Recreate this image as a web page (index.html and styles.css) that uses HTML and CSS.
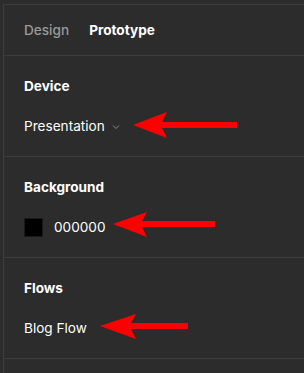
FILE: index.html
```html
<!DOCTYPE html>
<html>
<head>
<meta charset="utf-8">
<link rel="stylesheet" href="styles.css">
</head>
<body>
<div class="frame">
  <div class="panel">
    <div class="tabs">
      <span class="tab">Design</span>
      <span class="tab active">Prototype</span>
    </div>
    <section class="section">
      <div class="title">Device</div>
      <div class="row">
        <span class="value">Presentation</span>
        <svg class="chev" width="8" height="6" viewBox="0 0 8 6"><path d="M1 1.5 L4 4.5 L7 1.5" fill="none" stroke="#8a8a8a" stroke-width="1"/></svg>
      </div>
      <svg class="arrow a1" width="106" height="26" viewBox="0 0 106 26"><polygon points="0,13 34,0 29,10 104,10 104,16 29,16 34,26" fill="#ff0000"/></svg>
    </section>
    <section class="section">
      <div class="title">Background</div>
      <div class="row">
        <span class="swatch"></span>
        <span class="value hex">000000</span>
      </div>
      <svg class="arrow a2" width="104" height="26" viewBox="0 0 104 26"><polygon points="0,12 34,0 29,9 102,9 102,15 29,15 34,25" fill="#ff0000"/></svg>
    </section>
    <section class="section">
      <div class="title">Flows</div>
      <div class="row">
        <span class="value">Blog Flow</span>
      </div>
      <svg class="arrow a3" width="90" height="26" viewBox="0 0 90 26"><polygon points="0,12 36,0 31,9 88,9 88,15 31,15 36,25" fill="#ff0000"/></svg>
    </section>
  </div>
</div>
</body>
</html>
```

FILE: styles.css
```css
html, body {
  margin: 0;
  padding: 0;
  background: #2c2c2c;
}
body {
  font-family: Inter, "Noto Sans", sans-serif;
  color: #ffffff;
  width: 304px;
  height: 373px;
  overflow: hidden;
}
.frame {
  padding-top: 4px;
  padding-left: 3px;
  height: 369px;
}
.panel {
  border-top: 1px solid #3d3d3d;
  border-left: 1px solid #3d3d3d;
  height: 100%;
  box-sizing: border-box;
}
.tabs {
  display: flex;
  gap: 20px;
  padding: 0 0 0 20px;
  height: 50px;
  align-items: center;
  border-bottom: 1px solid #3d3d3d;
  font-size: 13.6px;
}
.tab {
  color: #9a9a9a;
  font-weight: 500;
}
.tab.active {
  color: #ffffff;
  font-weight: 700;
}
.section {
  position: relative;
  border-bottom: 1px solid #3d3d3d;
  padding: 0 0 0 20px;
  height: 101px;
  box-sizing: border-box;
}
.title {
  font-size: 13.6px;
  font-weight: 700;
  padding-top: 22px;
  height: 16px;
  line-height: 16px;
}
.row {
  display: flex;
  align-items: center;
  margin-top: 24px;
  height: 16px;
  font-size: 13.6px;
}
.value {
  line-height: 16px;
}
.chev {
  margin-left: 7px;
  margin-top: 1px;
}
.swatch {
  width: 19px;
  height: 19px;
  background: #000000;
  border: 1px solid #1a1a1a;
  box-sizing: border-box;
  margin-right: 11px;
}
.arrow {
  position: absolute;
}
.a1 { left: 129px; top: 56px; }
.a2 { left: 109px; top: 55px; }
.a3 { left: 96px; top: 56px; }
```
